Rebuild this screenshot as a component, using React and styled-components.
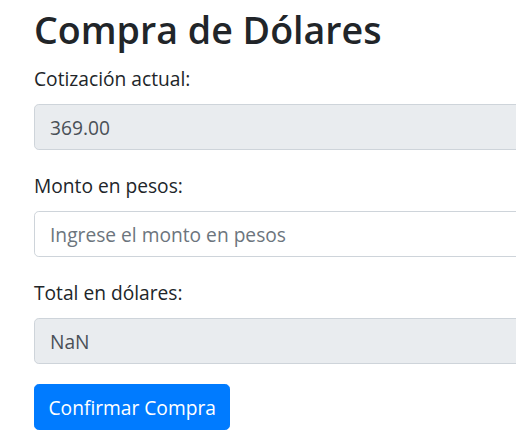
import React, { useState } from 'react';
import styled, { createGlobalStyle } from 'styled-components';

const GlobalStyle = createGlobalStyle`
  html, body {
    margin: 0;
    padding: 0;
    overflow: hidden;
    background: #fff;
  }
  body {
    font-family: 'Open Sans', 'Noto Sans', sans-serif;
    color: #212529;
  }
  * {
    box-sizing: border-box;
  }
`;

const Page = styled.div`
  width: 600px;
  padding: 7px 0 0 34px;
`;

const Title = styled.h1`
  margin: 0 0 10px 0;
  font-size: 37.6px;
  line-height: 46px;
  font-weight: 600;
  color: #212529;
`;

const FormGroup = styled.div`
  margin-bottom: 20px;
`;

const Label = styled.label`
  display: block;
  font-size: 19.2px;
  line-height: 31px;
  margin-bottom: 10px;
  color: #212529;
`;

const Input = styled.input`
  display: block;
  width: 100%;
  height: 46px;
  padding: 0 15px;
  font-family: inherit;
  font-size: 19.2px;
  color: #495057;
  background: ${(p) => (p.readOnly ? '#e9ecef' : '#fff')};
  border: 1.2px solid #ced4da;
  border-radius: 4.8px;
  outline: none;

  &::placeholder {
    color: #6c757d;
  }
`;

const Button = styled.button`
  height: 46px;
  padding: 0 13.5px;
  font-family: inherit;
  font-size: 19.2px;
  color: #fff;
  background: #007bff;
  border: 1.2px solid #007bff;
  border-radius: 4.8px;
  cursor: pointer;
`;

function App() {
  const [cotizacion] = useState(369);
  const [pesos, setPesos] = useState('');
  const total = (parseFloat(pesos) / cotizacion).toFixed(2);

  return (
    <Page>
      <GlobalStyle />
      <Title>Compra de Dólares</Title>
      <FormGroup>
        <Label>Cotización actual:</Label>
        <Input readOnly value={cotizacion.toFixed(2)} />
      </FormGroup>
      <FormGroup>
        <Label>Monto en pesos:</Label>
        <Input
          type="number"
          value={pesos}
          onChange={(e) => setPesos(e.target.value)}
          placeholder="Ingrese el monto en pesos"
        />
      </FormGroup>
      <FormGroup>
        <Label>Total en dólares:</Label>
        <Input readOnly value={total} />
      </FormGroup>
      <Button>Confirmar Compra</Button>
    </Page>
  );
}

export default App;
